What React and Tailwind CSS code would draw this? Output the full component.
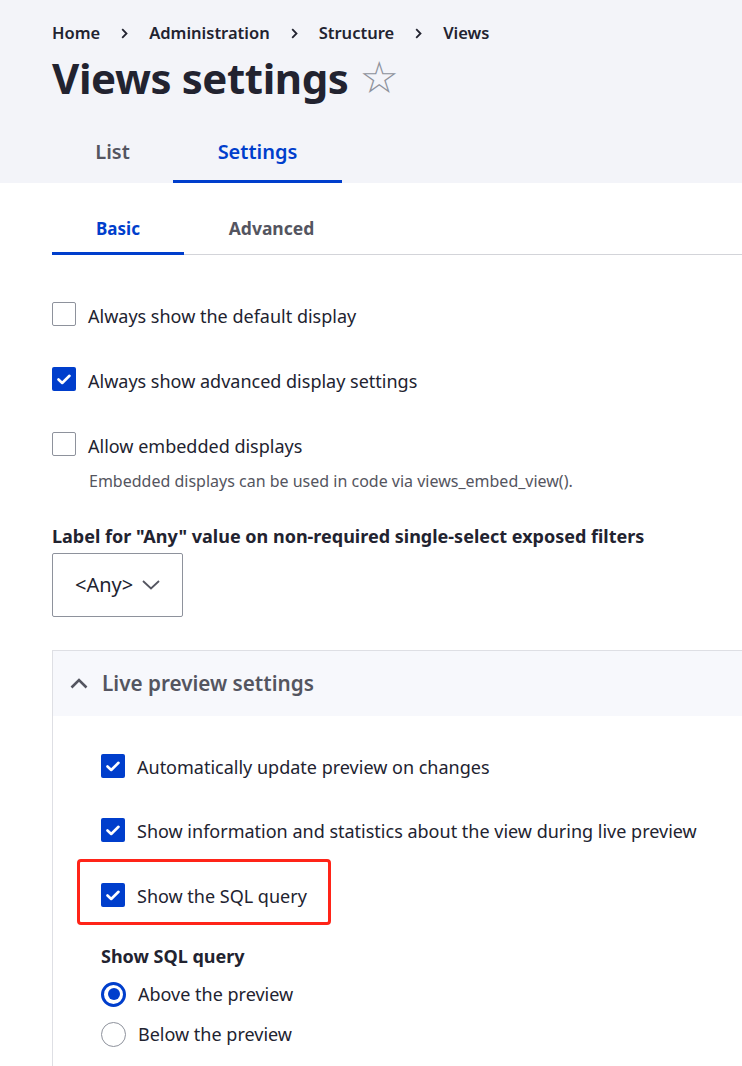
import React from "react";

const font = { fontFamily: '"Noto Sans", "Open Sans", sans-serif' };

function Check({ checked }) {
  if (checked) {
    return (
      <span className="flex h-[24px] w-[24px] shrink-0 items-center justify-center rounded-[2px] bg-[#003ecc]">
        <svg width="14" height="11" viewBox="0 0 14 11" fill="none">
          <path d="M1.5 5.5 L5.2 9 L12.5 1.8" stroke="#fff" strokeWidth="2.6" strokeLinecap="round" strokeLinejoin="round" />
        </svg>
      </span>
    );
  }
  return <span className="h-[24px] w-[24px] shrink-0 rounded-[2px] border border-[#8e929c] bg-white" />;
}

function Radio({ checked }) {
  if (checked) {
    return (
      <span className="flex h-[25px] w-[25px] shrink-0 items-center justify-center rounded-full border-[3px] border-[#003ecc] bg-white">
        <span className="h-[12px] w-[12px] rounded-full bg-[#003ecc]" />
      </span>
    );
  }
  return <span className="h-[25px] w-[25px] shrink-0 rounded-full border border-[#8e929c] bg-white" />;
}

function CheckRow({ checked, label, className, textPad = "pt-[3px]" }) {
  return (
    <div className={"flex h-[24px] items-center gap-[12px] " + (className || "")}>
      <Check checked={checked} />
      <span className={textPad + " text-[18px] leading-[24px] text-[#222330]"}>{label}</span>
    </div>
  );
}

function Crumb() {
  return (
    <svg className="mx-[21px]" width="7" height="11" viewBox="0 0 7 11" fill="none">
      <path d="M1.2 1.2 L5.5 5.5 L1.2 9.8" stroke="#222330" strokeWidth="1.8" />
    </svg>
  );
}

export default function App() {
  return (
    <div style={font} className="min-h-screen w-[742px] overflow-hidden bg-white text-[#222330]">
      {/* page header */}
      <div className="bg-[#f3f4f9] pl-[52px] pt-[22px]">
        <div className="flex h-[22px] items-center text-[16.5px] font-semibold leading-[22px]">
          <span>Home</span>
          <Crumb />
          <span>Administration</span>
          <Crumb />
          <span>Structure</span>
          <Crumb />
          <span>Views</span>
        </div>
        <div className="mt-[9px] flex h-[50px] items-center">
          <h1 className="text-[42px] font-bold leading-[50px] tracking-[-0.4px]">Views settings</h1>
          <span className="ml-[11px] text-[44px] leading-[50px] text-[#8e929c]" style={{ fontFamily: '"DejaVu Sans", sans-serif' }}>
            ☆
          </span>
        </div>
        <div className="mt-[18px] flex">
          <div className="flex h-[62px] w-[121px] items-center justify-center border-b-[3px] border-transparent pt-[3px] text-[20px] font-semibold text-[#545560]">
            List
          </div>
          <div className="flex h-[62px] w-[169px] items-center justify-center border-b-[3px] border-[#003ecc] pt-[3px] text-[20px] font-semibold text-[#003ecc]">
            Settings
          </div>
        </div>
      </div>

      {/* content */}
      <div className="pl-[52px]">
        <div className="flex border-b border-[#d3d4d9] pt-[18px]">
          <div className="-mb-px flex h-[54px] w-[132px] items-center justify-center border-b-[3px] border-[#003ecc] pt-[4px] text-[17px] font-bold text-[#003ecc]">
            Basic
          </div>
          <div className="-mb-px flex h-[54px] w-[175px] items-center justify-center border-b-[3px] border-transparent pt-[3px] text-[17.5px] font-bold text-[#545560]">
            Advanced
          </div>
        </div>

        <CheckRow className="mt-[47px]" label="Always show the default display" />
        <CheckRow className="mt-[41px]" checked label="Always show advanced display settings" />
        <CheckRow className="mt-[41px]" label="Allow embedded displays" />
        <div className="mt-[14px] pl-[37px] text-[16px] leading-[22px] text-[#545560]">
          Embedded displays can be used in code via views_embed_view().
        </div>

        <div className="mt-[33px] text-[18px] font-bold leading-[22px]">
          Label for "Any" value on non-required single-select exposed filters
        </div>
        <div className="mt-[6px] flex h-[64px] w-[131px] items-center gap-[9px] rounded-[2px] border border-[#8e929c] pl-[22px] text-[20px] text-[#222330]">
          <span>&lt;Any&gt;</span>
          <svg width="18" height="10" viewBox="0 0 18 10" fill="none">
            <path d="M1 1 L9 8.5 L17 1" stroke="#545560" strokeWidth="1.8" />
          </svg>
        </div>

        <div className="mt-[33px] w-[720px] border border-[#dedfe4]">
          <div className="flex h-[65px] items-center gap-[14px] bg-[#f7f8fc] pl-[17px]">
            <svg width="18" height="11" viewBox="0 0 18 11" fill="none">
              <path d="M1.5 9.5 L9 2 L16.5 9.5" stroke="#545560" strokeWidth="2.6" />
            </svg>
            <span className="text-[20.7px] font-semibold text-[#545560]">Live preview settings</span>
          </div>
          <div className="pb-[40px] pl-[48px]">
            <CheckRow className="mt-[38px]" textPad="pt-[1px]" checked label="Automatically update preview on changes" />
            <CheckRow className="mt-[40px]" textPad="pt-[1px]" checked label="Show information and statistics about the view during live preview" />
            <div className="relative mt-[41px]">
              <CheckRow textPad="pt-[1px]" checked label="Show the SQL query" />
              <div className="absolute -left-[24px] -top-[24px] h-[66px] w-[254px] rounded-[4px] border-[3px] border-[#ff2418]" />
            </div>
            <div className="mt-[38px] text-[18px] font-bold leading-[22px]">Show SQL query</div>
            <div className="mt-[15px] flex h-[24px] items-center gap-[12px]">
              <Radio checked />
              <span className="pt-[1px] text-[18px]">Above the preview</span>
            </div>
            <div className="mt-[16px] flex h-[24px] items-center gap-[12px]">
              <Radio />
              <span className="pt-[1px] text-[18px]">Below the preview</span>
            </div>
          </div>
        </div>
      </div>
    </div>
  );
}
